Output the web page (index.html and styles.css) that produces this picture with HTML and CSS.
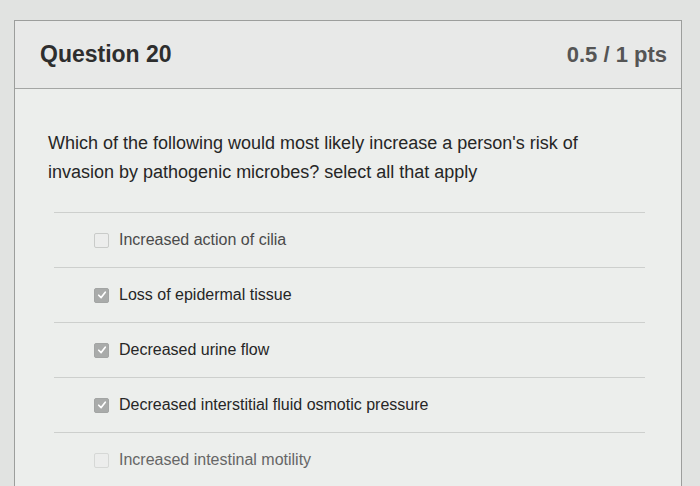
FILE: index.html
```html
<!DOCTYPE html>
<html>
<head>
<meta charset="utf-8">
<link rel="stylesheet" href="styles.css">
</head>
<body>
<div class="card">
  <div class="header">
    <span class="title">Question 20</span>
    <span class="pts">0.5 / 1 pts</span>
  </div>
  <div class="content">
    <p class="question">Which of the following would most likely increase a person's risk of invasion by pathogenic microbes? select all that apply</p>
    <div class="answers">
      <div class="answer"><span class="box"></span><span class="label">Increased action of cilia</span></div>
      <div class="answer"><span class="box checked"><svg viewBox="0 0 14 14"><path d="M3.2 7.3 L6 10 L10.8 3.8" fill="none" stroke="#fff" stroke-width="2" stroke-linecap="round" stroke-linejoin="round"/></svg></span><span class="label">Loss of epidermal tissue</span></div>
      <div class="answer"><span class="box checked"><svg viewBox="0 0 14 14"><path d="M3.2 7.3 L6 10 L10.8 3.8" fill="none" stroke="#fff" stroke-width="2" stroke-linecap="round" stroke-linejoin="round"/></svg></span><span class="label">Decreased urine flow</span></div>
      <div class="answer"><span class="box checked"><svg viewBox="0 0 14 14"><path d="M3.2 7.3 L6 10 L10.8 3.8" fill="none" stroke="#fff" stroke-width="2" stroke-linecap="round" stroke-linejoin="round"/></svg></span><span class="label">Decreased interstitial fluid osmotic pressure</span></div>
      <div class="answer faded"><span class="box"></span><span class="label">Increased intestinal motility</span></div>
    </div>
  </div>
</div>
</body>
</html>
```
FILE: styles.css
```css
html, body {
  margin: 0;
  padding: 0;
  height: 486px;
  overflow: hidden;
}
body {
  background: #e1e3e1;
  font-family: "Liberation Sans", Arial, sans-serif;
  color: #2b2b2b;
  padding: 20px 16px 0 14px;
  box-sizing: border-box;
}
.card {
  border: 1px solid #9c9e9c;
  border-bottom: none;
  background: #eceeec;
  height: 480px;
  margin-right: 2px;
}
.header {
  height: 67px;
  border-bottom: 1px solid #a4a6a4;
  background: #e8e9e8;
  display: flex;
  align-items: center;
  justify-content: space-between;
  padding: 0 14px 0 25px;
}
.title {
  font-size: 23px;
  font-weight: bold;
  color: #2e2e2e;
}
.pts {
  font-size: 22px;
  font-weight: bold;
  color: #555;
}
.content {
  padding: 0 36px 0 33px;
}
.question {
  margin: 0;
  padding: 40px 0 25px 0;
  font-size: 18px;
  line-height: 29px;
  color: #262626;
  max-width: 580px;
}
.answers {
  display: flex;
  flex-direction: column;
  margin-left: 6px;
}
.answer {
  height: 54px;
  border-top: 1px solid #cdcfcd;
  display: flex;
  align-items: center;
  padding-left: 40px;
  gap: 10px;
}
.box {
  width: 13px;
  height: 13px;
  border: 1px solid #c9cbc9;
  border-radius: 2px;
  background: #ecedec;
  display: flex;
  align-items: center;
  justify-content: center;
}
.box.checked {
  background: #a9abaa;
  border-color: #a3a5a4;
}
.box svg {
  width: 12px;
  height: 12px;
}
.label {
  font-size: 16px;
  color: #262626;
}
.answer:first-child .label {
  color: #4a4a4a;
}
.faded .label {
  color: #666;
}
.faded .box {
  border-color: #d6d8d6;
}
```
